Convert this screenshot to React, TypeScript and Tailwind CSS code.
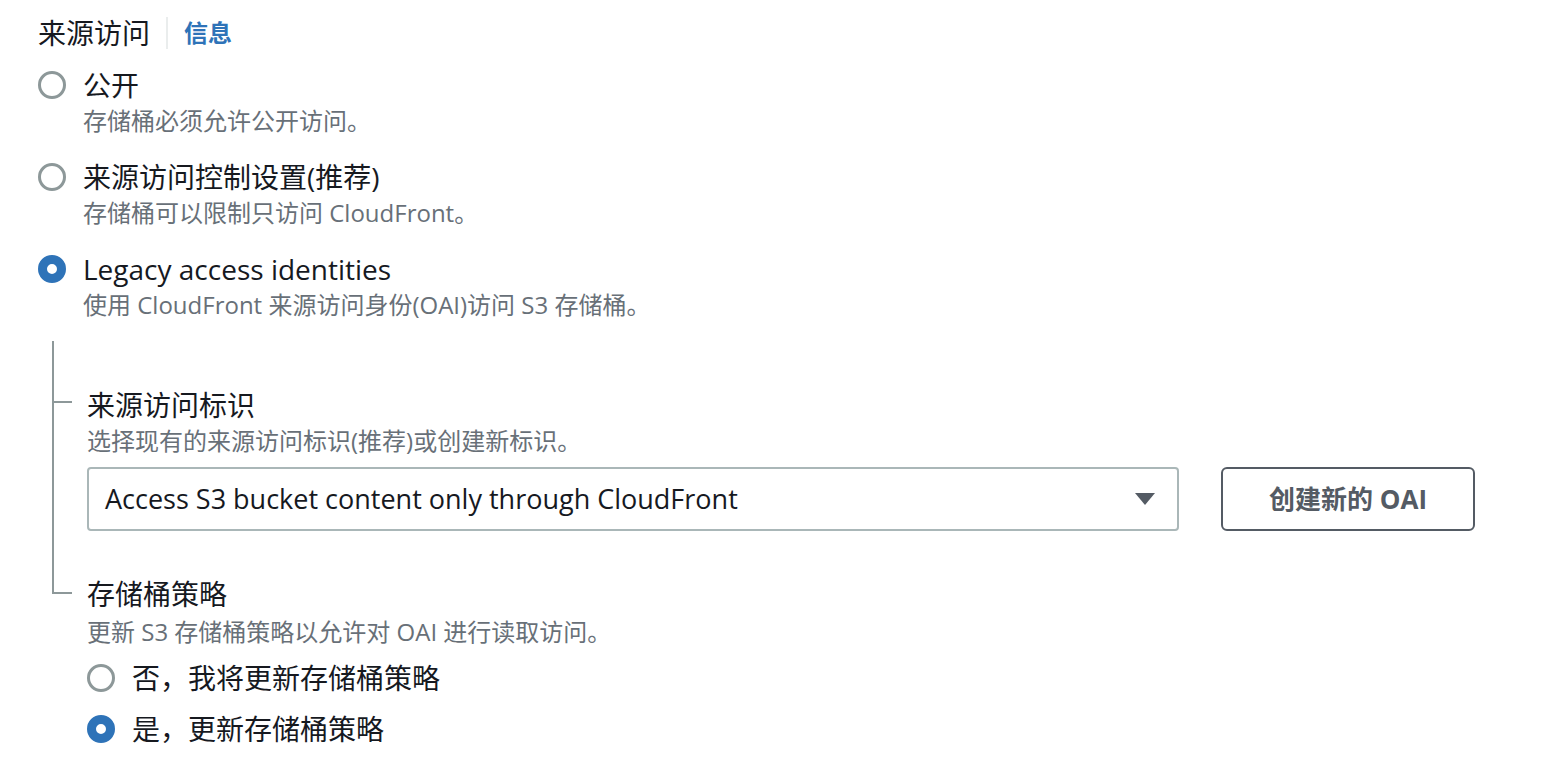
const FONT = "font-['Open_Sans','Noto_Sans_CJK_SC',sans-serif]";

function Radio({ checked }: { checked?: boolean }) {
  return checked ? (
    <span className="box-border block h-[28px] w-[28px] shrink-0 rounded-full border-[9px] border-[#2e73b8] bg-white" />
  ) : (
    <span className="box-border block h-[28px] w-[28px] shrink-0 rounded-full border-[3px] border-[#8d9899] bg-white" />
  );
}

function RadioOption({
  label,
  description,
  checked,
}: {
  label: string;
  description?: string;
  checked?: boolean;
}) {
  return (
    <div>
      <div className="flex h-[40px] items-center gap-[17px]">
        <Radio checked={checked} />
        <span className="text-[28px] leading-[40px] text-[#16191f]">{label}</span>
      </div>
      {description && (
        <p className="ml-[45px] text-[24px] leading-[32px] text-[#687078]">{description}</p>
      )}
    </div>
  );
}

function TreeTick({ last }: { last?: boolean }) {
  return (
    <div className="flex w-[35px] shrink-0 flex-col">
      <div className="h-[18px] w-[2px] bg-[#8d9899]" />
      <div className="h-[2px] w-[20px] bg-[#8d9899]" />
      {!last && <div className="w-[2px] flex-1 bg-[#8d9899]" />}
    </div>
  );
}

export default function App() {
  return (
    <div className={`${FONT} min-h-[770px] bg-white pl-[38px] pt-[13px]`}>
      <div className="flex h-[40px] items-center">
        <h2 className="text-[28px] font-normal leading-[40px] text-[#16191f]">来源访问</h2>
        <span className="ml-[16px] h-[32px] w-[2px] bg-[#eaeded]" />
        <a className="ml-[16px] text-[24px] font-bold leading-[40px] text-[#2e73b8]">信息</a>
      </div>

      <div className="mt-[12px] flex flex-col gap-[20px]">
        <RadioOption label="公开" description="存储桶必须允许公开访问。" />
        <RadioOption label="来源访问控制设置(推荐)" description="存储桶可以限制只访问 CloudFront。" />
        <RadioOption
          label="Legacy access identities"
          description="使用 CloudFront 来源访问身份(OAI)访问 S3 存储桶。"
          checked
        />
      </div>

      <div className="ml-[14px] mt-[20px]">
        <div className="h-[42px] w-[2px] bg-[#8d9899]" />

        <div className="flex">
          <TreeTick />
          <div className="pb-[43px]">
            <h3 className="pt-[2px] text-[28px] font-normal leading-[40px] text-[#16191f]">来源访问标识</h3>
            <p className="text-[24px] leading-[32px] text-[#687078]">选择现有的来源访问标识(推荐)或创建新标识。</p>
            <div className="mt-[10px] flex items-center gap-[42px]">
              <div className="box-border flex h-[64px] w-[1092px] items-center justify-between rounded-[4px] border-2 border-[#aab7b8] pl-[16px] pr-[22px]">
                <span className="text-[27px] text-[#16191f]">Access S3 bucket content only through CloudFront</span>
                <svg width="20" height="12" viewBox="0 0 20 12">
                  <path d="M0 0 H20 L10 12 Z" fill="#545b64" />
                </svg>
              </div>
              <button className="box-border h-[64px] w-[254px] rounded-[6px] border-2 border-[#545b64] bg-white text-[26px] font-bold text-[#545b64]">
                创建新的 OAI
              </button>
            </div>
          </div>
        </div>

        <div className="flex">
          <TreeTick last />
          <div>
            <h3 className="text-[28px] font-normal leading-[40px] text-[#16191f]">存储桶策略</h3>
            <p className="pt-[2px] text-[24px] leading-[32px] text-[#687078]">更新 S3 存储桶策略以允许对 OAI 进行读取访问。</p>
            <div className="mt-[10px] flex flex-col gap-[11px]">
              <RadioOption label="否，我将更新存储桶策略" />
              <RadioOption label="是，更新存储桶策略" checked />
            </div>
          </div>
        </div>
      </div>
    </div>
  );
}
